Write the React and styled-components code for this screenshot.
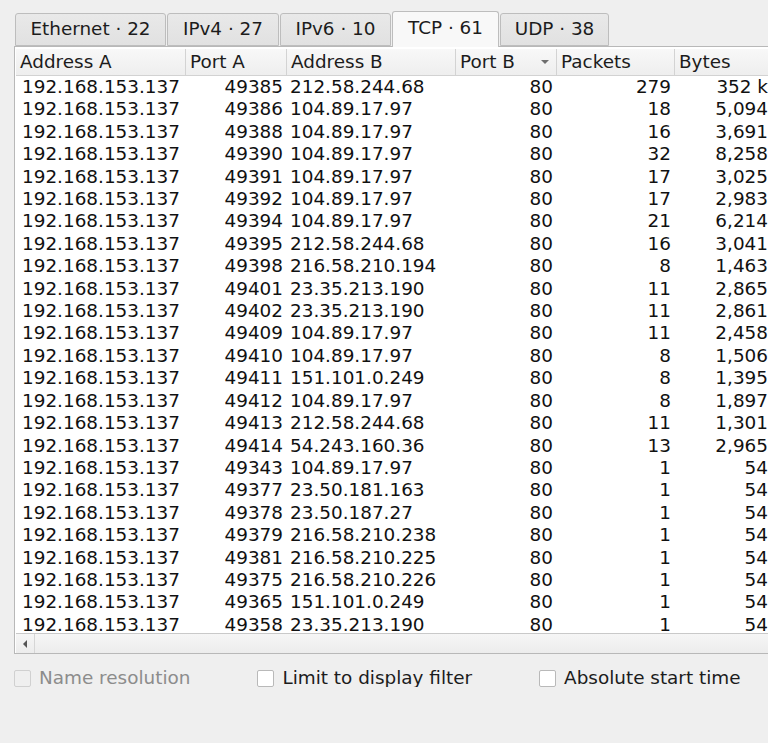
import React from 'react';
import styled, { createGlobalStyle } from 'styled-components';

const GlobalStyle = createGlobalStyle`
  body {
    margin: 0;
    background: #efefef;
    font-family: "DejaVu Sans", "Liberation Sans", sans-serif;
    font-size: 18.4px;
    color: #1c1c1c;
    overflow: hidden;
  }
`;

const COLUMNS = '170px 101px 169px 101px 118px 130px';

const tabs = [
  { label: 'Ethernet · 22', width: 151 },
  { label: 'IPv4 · 27', width: 112 },
  { label: 'IPv6 · 10', width: 111 },
  { label: 'TCP · 61', width: 107, active: true },
  { label: 'UDP · 38', width: 109 },
];

const rows = [
  ['49385', '212.58.244.68', '279', '352 k'],
  ['49386', '104.89.17.97', '18', '5,094'],
  ['49388', '104.89.17.97', '16', '3,691'],
  ['49390', '104.89.17.97', '32', '8,258'],
  ['49391', '104.89.17.97', '17', '3,025'],
  ['49392', '104.89.17.97', '17', '2,983'],
  ['49394', '104.89.17.97', '21', '6,214'],
  ['49395', '212.58.244.68', '16', '3,041'],
  ['49398', '216.58.210.194', '8', '1,463'],
  ['49401', '23.35.213.190', '11', '2,865'],
  ['49402', '23.35.213.190', '11', '2,861'],
  ['49409', '104.89.17.97', '11', '2,458'],
  ['49410', '104.89.17.97', '8', '1,506'],
  ['49411', '151.101.0.249', '8', '1,395'],
  ['49412', '104.89.17.97', '8', '1,897'],
  ['49413', '212.58.244.68', '11', '1,301'],
  ['49414', '54.243.160.36', '13', '2,965'],
  ['49343', '104.89.17.97', '1', '54'],
  ['49377', '23.50.181.163', '1', '54'],
  ['49378', '23.50.187.27', '1', '54'],
  ['49379', '216.58.210.238', '1', '54'],
  ['49381', '216.58.210.225', '1', '54'],
  ['49375', '216.58.210.226', '1', '54'],
  ['49365', '151.101.0.249', '1', '54'],
  ['49358', '23.35.213.190', '1', '54'],
];

const Page = styled.div`
  padding: 10px 0 0 14px;
  width: 820px;
`;

const TabBar = styled.div`
  display: flex;
  align-items: flex-end;
  height: 36px;
  padding-left: 1px;
`;

const Tab = styled.div`
  position: relative;
  box-sizing: border-box;
  width: ${(p) => p.$width}px;
  height: ${(p) => (p.$active ? '36px' : '33px')};
  margin-bottom: ${(p) => (p.$active ? '-1px' : '0')};
  margin-right: 1px;
  padding-top: ${(p) => (p.$active ? '3px' : '2px')};
  border: 1px solid #bdbdbd;
  border-bottom: ${(p) => (p.$active ? 'none' : '1px solid #bdbdbd')};
  border-radius: 3px 3px 0 0;
  background: ${(p) => (p.$active ? '#f8f8f8' : 'linear-gradient(#e9e9e9, #e1e1e1)')};
  z-index: ${(p) => (p.$active ? 2 : 1)};
  line-height: 26px;
  text-align: center;
  white-space: nowrap;
`;

const Frame = styled.div`
  box-sizing: border-box;
  border: 1px solid #b8b8b8;
  padding: 2px 0 0 1px;
  background: #ffffff;
  height: 608px;
  display: flex;
  flex-direction: column;
`;

const HeaderRow = styled.div`
  display: grid;
  grid-template-columns: ${COLUMNS};
  height: 26px;
  border-bottom: 1px solid #d2d2d2;
  background: linear-gradient(#f8f8f8, #eeeeee);
`;

const HeaderCell = styled.div`
  display: flex;
  align-items: center;
  justify-content: space-between;
  padding-left: 4px;
  padding-bottom: 1px;
  border-right: 1px solid #d3d3d3;
  white-space: nowrap;
`;

const SortArrow = styled.span`
  width: 0;
  height: 0;
  margin-right: 7px;
  border-left: 4px solid transparent;
  border-right: 4px solid transparent;
  border-top: 4px solid #6e6e6e;
`;

const Body = styled.div`
  flex: 1;
  overflow: hidden;
`;

const Row = styled.div`
  display: grid;
  grid-template-columns: ${COLUMNS};
  height: 22.42px;
  line-height: 22.42px;
  color: #111;
`;

const Cell = styled.div`
  white-space: nowrap;
  overflow: hidden;
  text-align: ${(p) => (p.$right ? 'right' : 'left')};
  padding: ${(p) => (p.$first ? '0 4px 0 6px' : p.$right ? '0 4px 0 0' : '0 4px 0 3px')};
`;

const BytesCell = styled(Cell)`
  padding-right: 37px;
`;

const ScrollBar = styled.div`
  display: flex;
  height: 19px;
  border-top: 1px solid #c9c9c9;
  background: linear-gradient(#f6f6f6, #ececec);
`;

const ScrollButton = styled.div`
  width: 18px;
  display: flex;
  align-items: center;
  justify-content: center;
  border-right: 1px solid #d6d6d6;
`;

const LeftArrow = styled.span`
  width: 0;
  height: 0;
  border-top: 4px solid transparent;
  border-bottom: 4px solid transparent;
  border-right: 4px solid #555;
`;

const Options = styled.div`
  display: flex;
  gap: 67px;
  margin-top: 15px;
`;

const Option = styled.label`
  display: flex;
  align-items: center;
  gap: 8px;
  color: ${(p) => (p.$disabled ? '#8c8c8c' : '#1c1c1c')};
  line-height: 18px;
`;

const Box = styled.span`
  box-sizing: border-box;
  width: 17px;
  height: 17px;
  border: 1px solid ${(p) => (p.$disabled ? '#d0d0d0' : '#b9b9b9')};
  border-radius: 2px;
  background: ${(p) => (p.$disabled ? '#efefef' : '#ffffff')};
`;

export default function App() {
  return (
    <>
      <GlobalStyle />
      <Page>
        <TabBar>
          {tabs.map((t) => (
            <Tab key={t.label} $active={t.active} $width={t.width}>
              {t.label}
            </Tab>
          ))}
        </TabBar>
        <Frame>
          <HeaderRow>
            <HeaderCell>Address A</HeaderCell>
            <HeaderCell>Port A</HeaderCell>
            <HeaderCell>Address B</HeaderCell>
            <HeaderCell>
              Port B
              <SortArrow />
            </HeaderCell>
            <HeaderCell>Packets</HeaderCell>
            <HeaderCell>Bytes</HeaderCell>
          </HeaderRow>
          <Body>
            {rows.map((r, i) => (
              <Row key={i}>
                <Cell $first>192.168.153.137</Cell>
                <Cell $right>{r[0]}</Cell>
                <Cell>{r[1]}</Cell>
                <Cell $right>80</Cell>
                <Cell $right>{r[2]}</Cell>
                <BytesCell $right>{r[3]}</BytesCell>
              </Row>
            ))}
          </Body>
          <ScrollBar>
            <ScrollButton>
              <LeftArrow />
            </ScrollButton>
          </ScrollBar>
        </Frame>
        <Options>
          <Option $disabled>
            <Box $disabled />
            Name resolution
          </Option>
          <Option>
            <Box />
            Limit to display filter
          </Option>
          <Option>
            <Box />
            Absolute start time
          </Option>
        </Options>
      </Page>
    </>
  );
}
